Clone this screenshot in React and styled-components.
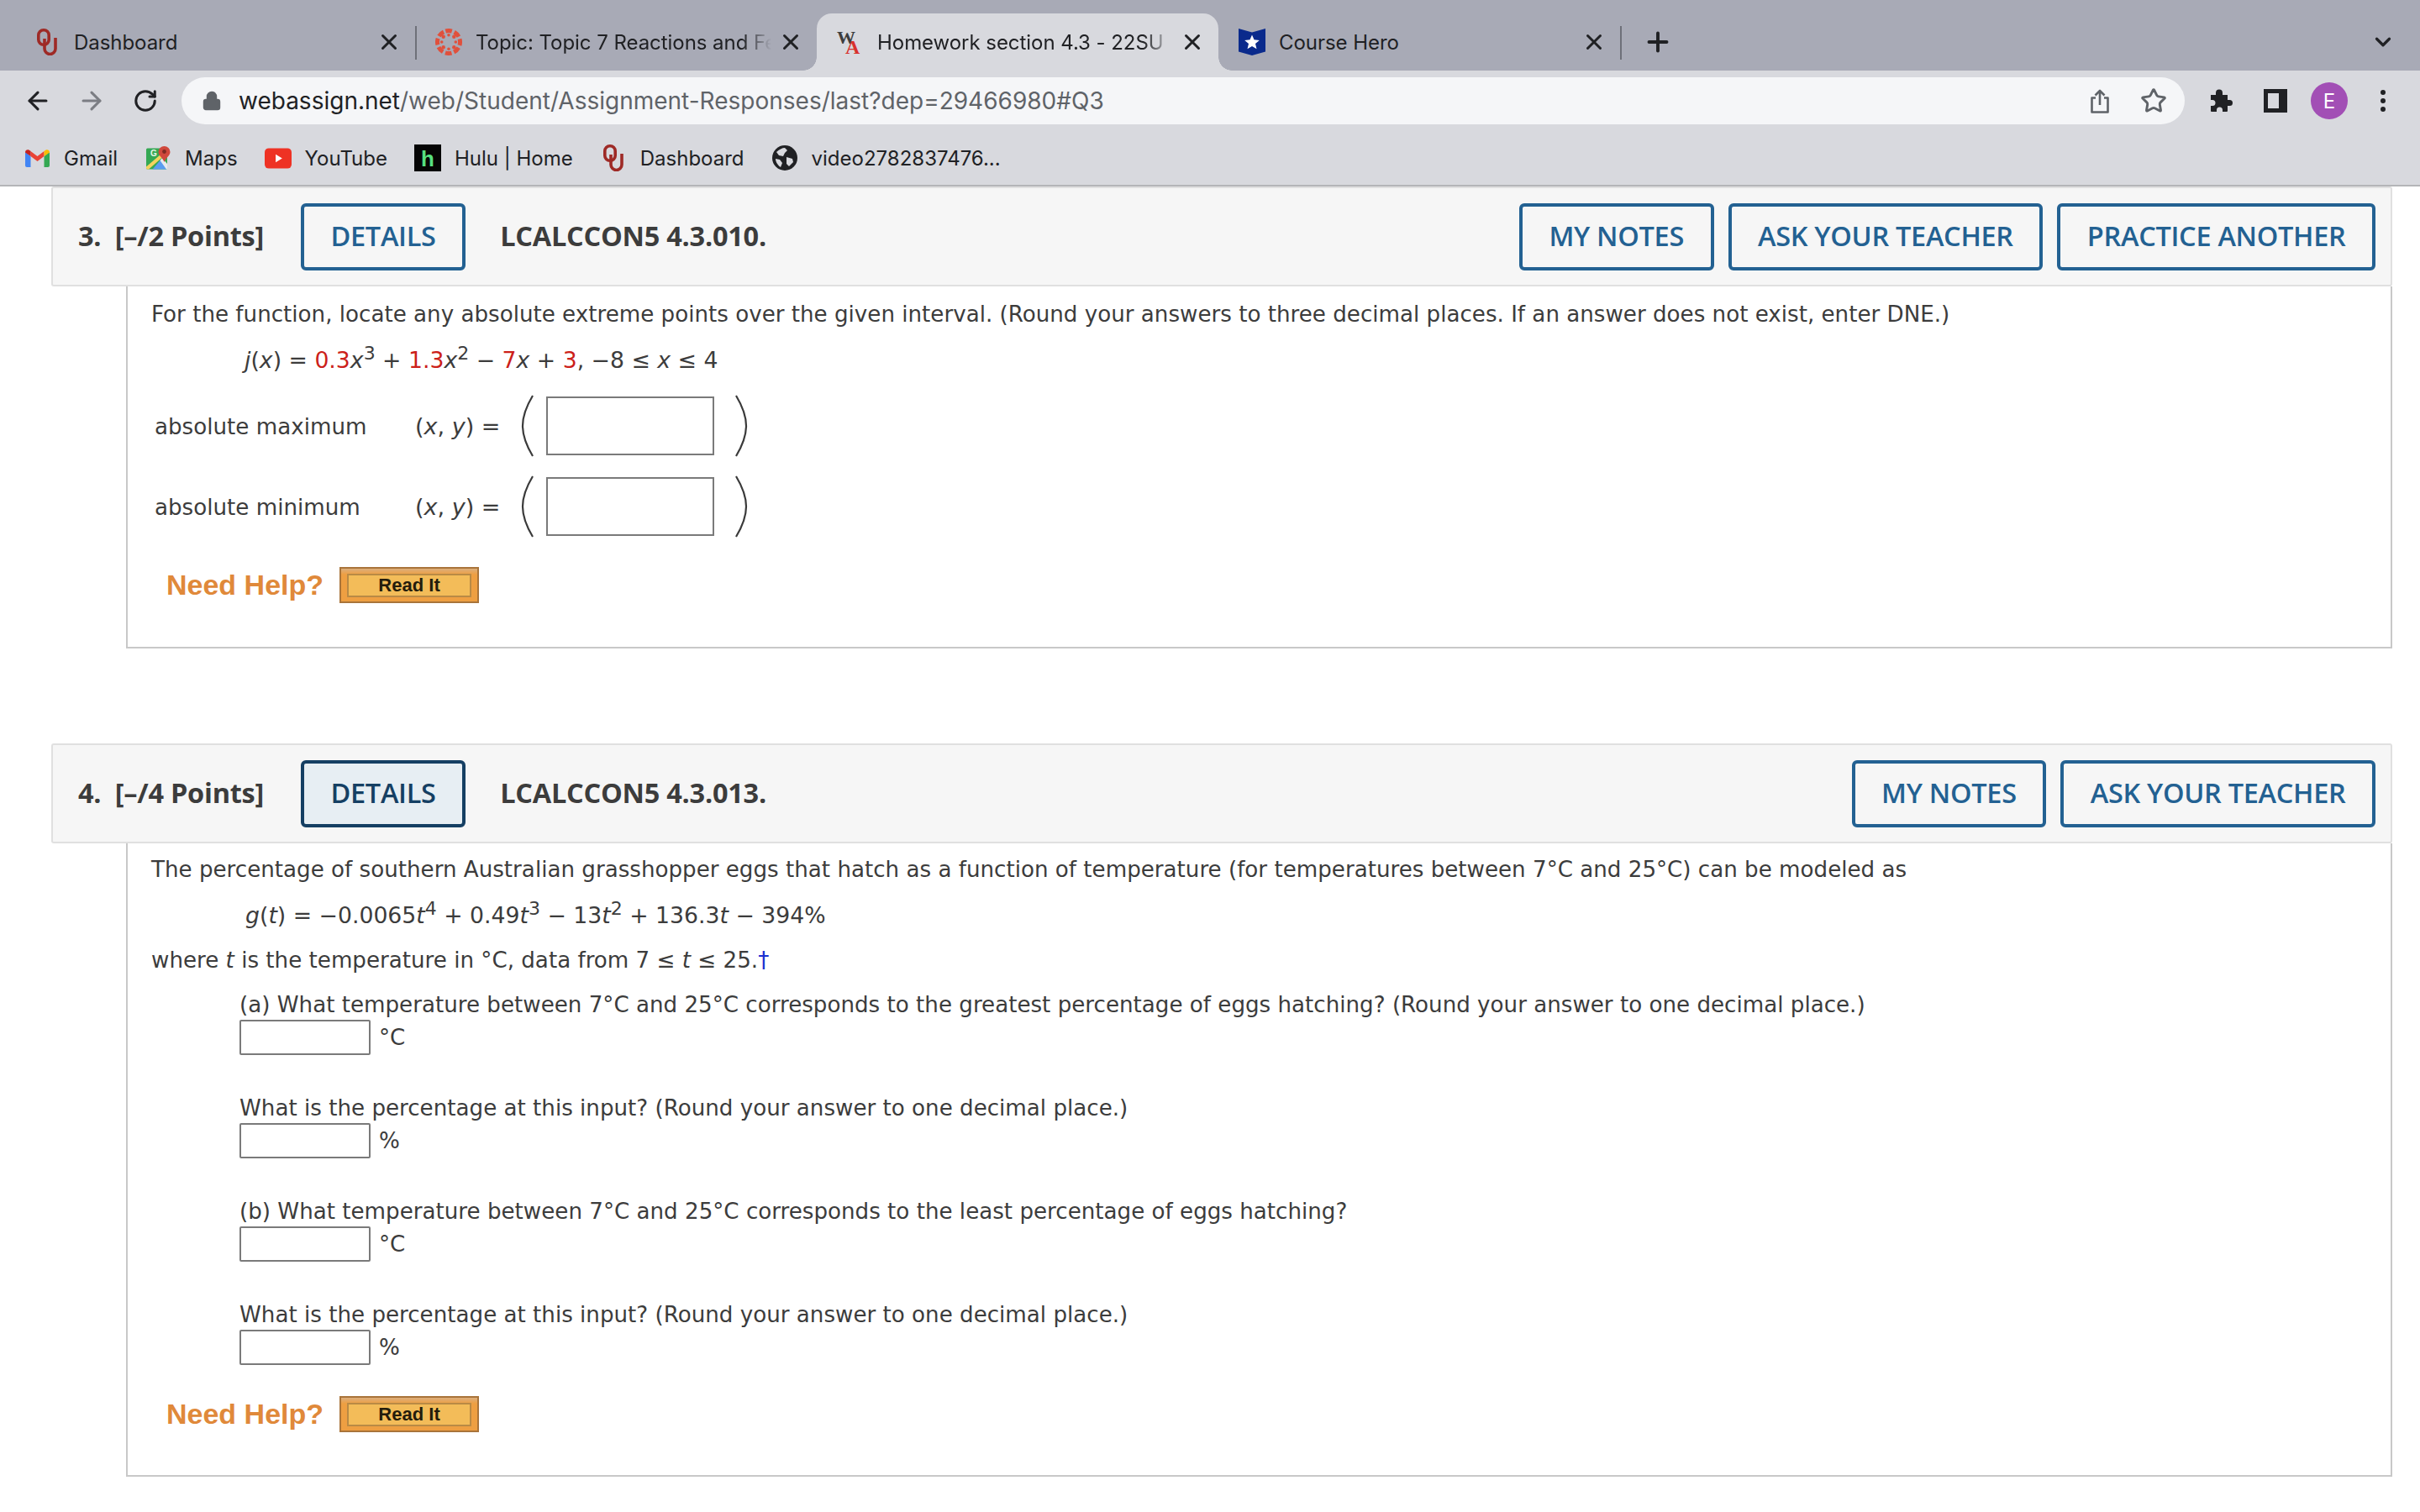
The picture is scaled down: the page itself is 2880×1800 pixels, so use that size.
import React from 'react';
import styled, { createGlobalStyle, css } from 'styled-components';
import { ArrowLeft, ArrowRight, RotateCw, Lock, Star, X, Plus, ChevronDown } from 'lucide-react';

const GlobalStyle = createGlobalStyle`
  html, body { margin: 0; padding: 0; background: #fff; }
  body { width: 2880px; height: 1800px; overflow: hidden; font-family: "DejaVu Sans", sans-serif; }
`;

const Shell = styled.div`
  width: 2880px;
  height: 1800px;
  overflow: hidden;
`;

const TabStrip = styled.div`
  height: 84px;
  background: #a8aab6;
  display: flex;
  align-items: flex-end;
  padding-left: 16px;
`;

const Tab = styled.div`
  width: 478px;
  flex: none;
  height: 68px;
  box-sizing: border-box;
  padding: 0 16px 0 24px;
  display: flex;
  align-items: center;
  gap: 16px;
  position: relative;
  background: ${(p) => (p.$active ? '#d8d9de' : 'transparent')};
  border-radius: ${(p) => (p.$active ? '18px 18px 0 0' : '0')};
  ${(p) =>
    p.$sep &&
    css`
      &::after {
        content: '';
        position: absolute;
        right: -2px;
        top: 15px;
        width: 2px;
        height: 40px;
        background: #6e7079;
      }
    `}
  ${(p) =>
    p.$active &&
    css`
      &::before,
      &::after {
        content: '';
        position: absolute;
        bottom: 0;
        width: 16px;
        height: 16px;
      }
      &::before {
        left: -16px;
        background: radial-gradient(circle at 0 0, transparent 15.5px, #d8d9de 16px);
      }
      &::after {
        right: -16px;
        background: radial-gradient(circle at 100% 0, transparent 15.5px, #d8d9de 16px);
      }
    `}
`;

const IconSlot = styled.div`
  width: 32px;
  flex: none;
  display: flex;
  align-items: center;
  justify-content: center;
`;

const TabTitle = styled.span`
  flex: 1;
  overflow: hidden;
  white-space: nowrap;
  font: 400 24px Inter, sans-serif;
  letter-spacing: -0.05px;
  color: #202124;
  -webkit-mask-image: ${(p) => (p.$fade ? 'linear-gradient(90deg, #000 90%, transparent 100%)' : 'none')};
  mask-image: ${(p) => (p.$fade ? 'linear-gradient(90deg, #000 90%, transparent 100%)' : 'none')};
`;

const CloseIcon = styled(X)`
  flex: none;
  margin-left: -8px;
  color: #202124;
`;

const NewTab = styled.div`
  margin: 0 0 16px 27px;
  color: #202124;
  display: flex;
`;

const StripEnd = styled.div`
  margin: 0 29px 19px auto;
  color: #202124;
  display: flex;
`;

const Toolbar = styled.div`
  height: 72px;
  background: #d8d9de;
  display: flex;
  align-items: center;
  padding: 0 0 0 26px;
  box-sizing: border-box;
`;

const NavBtn = styled.div`
  width: 38px;
  margin-right: 26px;
  display: flex;
  justify-content: center;
  color: ${(p) => (p.$dim ? '#7b7d83' : '#202124')};
`;

const AddressBar = styled.div`
  width: 2384px;
  height: 56px;
  margin-left: -2px;
  border-radius: 28px;
  background: #f5f6f8;
  display: flex;
  align-items: center;
  padding: 0 21px 0 24px;
  box-sizing: border-box;
  color: #5f6368;
`;

const Url = styled.div`
  flex: 1;
  margin-left: 20px;
  font: 400 28px Inter, sans-serif;
  color: #5f6368;
  b { font-weight: 400; color: #202124; }
`;

const BarIcons = styled.div`
  display: flex;
  gap: 37px;
  align-items: center;
`;

const ToolIcons = styled.div`
  display: flex;
  align-items: center;
  gap: 28px;
  margin-left: 30px;
`;

const PuzzleWrap = styled.div`
  display: flex;
  margin-right: 8px;
`;

const Avatar = styled.div`
  width: 44px;
  height: 44px;
  border-radius: 50%;
  background: #a24fb5;
  color: #fff;
  display: flex;
  align-items: center;
  justify-content: center;
  font: 400 24px Inter, sans-serif;
`;

const Bookmarks = styled.div`
  height: 64px;
  background: #d8d9de;
  border-bottom: 2px solid #b4b5b8;
  display: flex;
  align-items: center;
  padding: 0 0 0 28px;
  gap: 32px;
`;

const Bookmark = styled.div`
  display: flex;
  align-items: center;
  gap: 16px;
  font: 400 24px Inter, sans-serif;
  color: #202124;
`;

const Page = styled.div`
  padding: 0 33px 0 61px;
`;

const Question = styled.section`
  margin-bottom: ${(p) => p.$gap || 0}px;
`;

const Header = styled.div`
  height: 119px;
  box-sizing: border-box;
  background: #f6f6f6;
  border: 2px solid #e0e0e0;
  border-radius: 3px;
  display: flex;
  align-items: center;
  padding: 0 18px 0 30px;
  font-family: "Open Sans", sans-serif;
`;

const Points = styled.div`
  font-size: 32.5px;
  font-weight: 700;
  color: #3c3c3c;
  width: 265px;
  white-space: pre;
  letter-spacing: -0.25px;
  padding-bottom: 2px;
`;

const ActionBtn = styled.div`
  height: 80px;
  box-sizing: border-box;
  padding: 0 31.5px 2px;
  border: 4px solid ${(p) => (p.$focus ? '#153f63' : '#236192')};
  border-radius: 6px;
  background: ${(p) => (p.$focus ? '#e7eef3' : 'transparent')};
  color: ${(p) => (p.$focus ? '#153f63' : '#236192')};
  font-size: 32.5px;
  font-weight: 600;
  display: flex;
  align-items: center;
  letter-spacing: -0.3px;
  white-space: nowrap;
`;

const Code = styled.div`
  margin-left: 41px;
  margin-right: auto;
  font-size: 32.5px;
  font-weight: 700;
  color: #3c3c3c;
  letter-spacing: -0.25px;
  padding-bottom: 2px;
`;

const Actions = styled.div`
  display: flex;
  gap: 17px;
`;

const Body = styled.div`
  margin-left: 89px;
  height: ${(p) => p.$h}px;
  box-sizing: border-box;
  border: 2px solid #c8c8c8;
  border-top: 0;
  padding: ${(p) => p.$pt}px 0 0 28px;
  font-size: 26.15px;
  color: #3c3c3c;
  line-height: 36px;
`;

const Line = styled.div`
  margin-top: ${(p) => p.$mt || 0}px;
  margin-left: ${(p) => p.$ml || 0}px;
  white-space: nowrap;
`;

const MathLine = styled(Line)`
  font-size: 26.7px;
`;

const Red = styled.span`
  color: #cc1f1a;
`;

const I = styled.i`
  font-style: oblique;
`;

const Sup = styled.sup`
  font-size: 22px;
  line-height: 0;
`;

const Dagger = styled.span`
  color: #1a2fd0;
`;

const PointRow = styled.div`
  display: flex;
  align-items: center;
  height: 80px;
  margin-top: ${(p) => p.$mt || 0}px;
  padding-left: 4px;
`;

const PointLabel = styled.div`
  width: 310px;
  padding-top: 2px;
`;

const PointEq = styled.div`
  width: 125px;
  padding-top: 2px;
  font-size: 27px;
  white-space: nowrap;
`;

const BigInput = styled.div`
  width: 200px;
  height: 70px;
  box-sizing: border-box;
  border: 2px solid #7a7a7a;
  background: #fff;
  margin: 0 21px 0 11px;
`;

const SmallInput = styled.div`
  width: 156px;
  height: 42px;
  box-sizing: border-box;
  border: 2px solid #7a7a7a;
  border-radius: 2px;
  background: #fff;
`;

const AnswerRow = styled.div`
  display: flex;
  align-items: center;
  gap: 10px;
  margin-left: 105px;
  height: 42px;
`;

const HelpRow = styled.div`
  display: flex;
  align-items: center;
  gap: 19px;
  margin: ${(p) => p.$mt}px 0 0 18px;
`;

const NeedHelp = styled.div`
  font: 700 34px "Liberation Sans", sans-serif;
  color: #e0893a;
`;

const ReadIt = styled.div`
  width: 166px;
  height: 43px;
  box-sizing: border-box;
  border: 2px solid #a9743a;
  background: linear-gradient(#dcae7c 0, #ee9f42 7px);
  padding: 6px 7px 5px;
  display: flex;
`;

const ReadItInner = styled.div`
  flex: 1;
  border: 2px solid #b98a45;
  background: #f3bc59;
  display: flex;
  align-items: center;
  justify-content: center;
  font: 700 22px "Liberation Sans", sans-serif;
  color: #241c0c;
`;

const OuIcon = () => (
  <svg width="24" height="32" viewBox="0 0 24 32" fill="none" stroke="#9e2a26" strokeWidth="3.6">
    <rect x="1.8" y="1.8" width="12.4" height="17.400" rx="6" />
    <path d="M9 12v12a6.500 6.500 0 0 0 13 0V11" />
  </svg>
);

const CanvasIcon = () => (
  <svg width="32" height="32" viewBox="0 0 32 32" fill="#e0503c">
    <circle cx="16" cy="16" r="13.500" fill="none" stroke="#e0503c" strokeWidth="5" strokeDasharray="7.6 3" transform="rotate(-106 16 16)" />
    <circle cx="16" cy="7.700" r="1.800" />
    <circle cx="16" cy="24.300" r="1.800" />
    <circle cx="7.700" cy="16" r="1.800" />
    <circle cx="24.300" cy="16" r="1.800" />
    <circle cx="9.700" cy="9.700" r="2.200" />
    <circle cx="22.300" cy="9.700" r="2.200" />
    <circle cx="9.700" cy="22.300" r="2.200" />
    <circle cx="22.300" cy="22.300" r="2.200" />
  </svg>
);

const LogoText = styled.text`
  font-family: "Liberation Serif", serif;
  font-weight: 700;
`;

const WaIcon = () => (
  <svg width="30" height="30" viewBox="0 0 30 30" overflow="visible">
    <LogoText x="-1" y="17" fontSize="22" fill="#3d3d3d">W</LogoText>
    <LogoText x="9" y="29" fontSize="24" fill="#d8322e">A</LogoText>
  </svg>
);

const ShieldIcon = () => (
  <svg width="32" height="32" viewBox="0 0 32 32">
    <path d="M0 0l16 4.500L32 0v27.500L16 32 0 27.500z" fill="#0a2a8c" />
    <path d="M16 7.500l2.500 5.800 6.300.6-4.800 4.100 1.500 6.200-5.500-3.300-5.500 3.300 1.500-6.200-4.800-4.100 6.300-.6z" fill="#fff" />
  </svg>
);

const GmailIcon = () => (
  <svg width="29" height="21" viewBox="0 0 29 21">
    <path d="M0 3v16a2 2 0 0 0 2 2h4.500V8z" fill="#4285f4" />
    <path d="M29 3v16a2 2 0 0 1-2 2h-4.500V8z" fill="#34a853" />
    <path d="M6.500 8V2l8 6 8-6v6l-8 6z" fill="#ea4335" />
    <path d="M0 3.500C0 .5 3.500-1 6.500 2v6L0 3.500z" fill="#c5221f" />
    <path d="M29 3.500C29 .5 25.500-1 22.500 2v6L29 3.500z" fill="#fbbc04" />
  </svg>
);

const MapsIcon = () => (
  <svg width="29" height="28" viewBox="0 0 29 28">
    <rect y="2.500" width="25" height="25" rx="1.500" fill="#34a853" />
    <path d="M7.500 27.500L17 16.500l8 11z" fill="#5a9cf0" />
    <path d="M0 24.500L17 10l2.500 3L3 27.500H1.500A1.500 1.500 0 0 1 0 26z" fill="#f4d35e" />
    <path d="M19 14l6 7v6.500h-1L16.500 17z" fill="#e8eaed" />
    <path d="M21.500 0a7 7 0 0 1 7 7c0 4.500-5.500 7-7 12-1.500-5-7-7.500-7-12a7 7 0 0 1 7-7z" fill="#d0483c" />
    <circle cx="21.500" cy="6.500" r="2.400" fill="#7e2a22" />
    <text x="5" y="12" fontSize="10" fontWeight="700" fill="#e8f5e9" fontFamily="Liberation Sans, sans-serif">G</text>
  </svg>
);

const YoutubeIcon = () => (
  <svg width="33" height="25" viewBox="0 0 33 25">
    <rect width="33" height="25" rx="5" fill="#ee3224" />
    <path d="M13.500 7.500l8 5-8 5z" fill="#fff" />
  </svg>
);

const HuluIcon = () => (
  <svg width="32" height="32" viewBox="0 0 32 32">
    <rect width="32" height="32" fill="#050505" />
    <text x="16" y="26" textAnchor="middle" fontSize="26" fontWeight="700" fill="#57e07f" fontFamily="Liberation Sans, sans-serif">h</text>
  </svg>
);

const GlobeIcon = () => (
  <svg width="30" height="30" viewBox="0 0 30 30">
    <circle cx="15" cy="15" r="15" fill="#202124" />
    <path d="M5 8c3-3 7-5 10-5l3 3-3 3-2 4-5-1zM17 14l7 2 1 4-5 5-3-3zM4 16l5 1 3 4-2 5c-3-2-6-6-6-10z" fill="#d8d9de" />
  </svg>
);

const ShareIcon = () => (
  <svg width="22" height="29" viewBox="0 0 22 29" fill="none" stroke="#5f6368" strokeWidth="2.600" strokeLinejoin="round">
    <path d="M6 10.500H1.500v17h19v-17H16M11 19V2M5.500 7.500L11 2l5.500 5.500" />
  </svg>
);

const PuzzleIcon = () => (
  <svg width="28" height="28" viewBox="0 0 28 28" fill="#202124">
    <path d="M1 7h6V4.500a4 4 0 0 1 8 0V7h6v6h2.500a3.500 3.500 0 0 1 0 7H21v6a1 1 0 0 1-1 1h-5v-2a3.500 3.500 0 0 0-7 0v2H2a1 1 0 0 1-1-1v-6h2a3.500 3.500 0 0 0 0-7H1V8z" />
  </svg>
);

const PanelIcon = () => (
  <svg width="28" height="28" viewBox="0 0 28 28">
    <path d="M0 0h28v28H0z" fill="#202124" />
    <path d="M5 5h13v18H5z" fill="#d8d9de" />
  </svg>
);

const MenuDots = () => (
  <svg width="28" height="28" viewBox="0 0 28 28" fill="#202124">
    <circle cx="14" cy="4" r="3" />
    <circle cx="14" cy="14" r="3" />
    <circle cx="14" cy="24" r="3" />
  </svg>
);

const BigParen = ({ right }) => (
  <svg width="20" height="74" viewBox="0 0 20 74" style={right ? { transform: 'scaleX(-1)' } : undefined}>
    <path d="M15 1C6 16 3 27 3 37s3 21 12 36" fill="none" stroke="#3a3a3a" strokeWidth="2.2" />
  </svg>
);

const tabs = [
  { title: 'Dashboard', icon: <OuIcon />, sep: true },
  { title: 'Topic: Topic 7 Reactions and Fe', icon: <CanvasIcon />, fade: true },
  { title: 'Homework section 4.3 - 22SU', icon: <WaIcon />, fade: true, active: true },
  { title: 'Course Hero', icon: <ShieldIcon />, sep: true },
];

const marks = [
  { title: 'Gmail', icon: <GmailIcon /> },
  { title: 'Maps', icon: <MapsIcon /> },
  { title: 'YouTube', icon: <YoutubeIcon /> },
  { title: 'Hulu | Home', icon: <HuluIcon /> },
  { title: 'Dashboard', icon: <OuIcon /> },
  { title: 'video2782837476...', icon: <GlobeIcon /> },
];

const HelpLine = ({ mt }) => (
  <HelpRow $mt={mt}>
    <NeedHelp>Need Help?</NeedHelp>
    <ReadIt><ReadItInner>Read It</ReadItInner></ReadIt>
  </HelpRow>
);

const PointAnswer = ({ label, mt }) => (
  <PointRow $mt={mt}>
    <PointLabel>{label}</PointLabel>
    <PointEq>(<I>x</I>, <I>y</I>) =</PointEq>
    <BigParen />
    <BigInput />
    <BigParen right />
  </PointRow>
);

const App = () => (
  <Shell>
    <GlobalStyle />
    <TabStrip>
      {tabs.map((t) => (
        <Tab key={t.title} $active={t.active} $sep={t.sep}>
          <IconSlot>{t.icon}</IconSlot>
          <TabTitle $fade={t.fade}>{t.title}</TabTitle>
          <CloseIcon size={30} strokeWidth={2.4} />
        </Tab>
      ))}
      <NewTab><Plus size={36} strokeWidth={2.6} /></NewTab>
      <StripEnd><ChevronDown size={30} strokeWidth={2.6} /></StripEnd>
    </TabStrip>

    <Toolbar>
      <NavBtn><ArrowLeft size={34} strokeWidth={2.2} /></NavBtn>
      <NavBtn $dim><ArrowRight size={34} strokeWidth={2.2} /></NavBtn>
      <NavBtn><RotateCw size={30} strokeWidth={2.4} /></NavBtn>
      <AddressBar>
        <Lock size={24} fill="#5f6368" strokeWidth={2.4} />
        <Url><b>webassign.net</b>/web/Student/Assignment-Responses/last?dep=29466980#Q3</Url>
        <BarIcons>
          <ShareIcon />
          <Star size={32} strokeWidth={2.2} />
        </BarIcons>
      </AddressBar>
      <ToolIcons>
        <PuzzleWrap><PuzzleIcon /></PuzzleWrap>
        <PanelIcon />
        <Avatar>E</Avatar>
        <MenuDots />
      </ToolIcons>
    </Toolbar>

    <Bookmarks>
      {marks.map((m, i) => (
        <Bookmark key={i}><IconSlot>{m.icon}</IconSlot>{m.title}</Bookmark>
      ))}
    </Bookmarks>

    <Page>
      <Question $gap={113}>
        <Header>
          <Points>3.  [–/2 Points]</Points>
          <ActionBtn>DETAILS</ActionBtn>
          <Code>LCALCCON5 4.3.010.</Code>
          <Actions>
            <ActionBtn>MY NOTES</ActionBtn>
            <ActionBtn>ASK YOUR TEACHER</ActionBtn>
            <ActionBtn>PRACTICE ANOTHER</ActionBtn>
          </Actions>
        </Header>
        <Body $h={431} $pt={15}>
          <Line>For the function, locate any absolute extreme points over the given interval. (Round your answers to three decimal places. If an answer does not exist, enter DNE.)</Line>
          <MathLine $ml={111} $mt={19}>
            <I>j</I>(<I>x</I>) = <Red>0.3</Red><I>x</I><Sup>3</Sup> + <Red>1.3</Red><I>x</I><Sup>2</Sup> − <Red>7</Red><I>x</I> + <Red>3</Red>, −8 ≤ <I>x</I> ≤ 4
          </MathLine>
          <PointAnswer label="absolute maximum" mt={20} />
          <PointAnswer label="absolute minimum" mt={16} />
          <HelpLine mt={32} />
        </Body>
      </Question>

      <Question>
        <Header>
          <Points>4.  [–/4 Points]</Points>
          <ActionBtn $focus>DETAILS</ActionBtn>
          <Code>LCALCCON5 4.3.013.</Code>
          <Actions>
            <ActionBtn>MY NOTES</ActionBtn>
            <ActionBtn>ASK YOUR TEACHER</ActionBtn>
          </Actions>
        </Header>
        <Body $h={754} $pt={13}>
          <Line>The percentage of southern Australian grasshopper eggs that hatch as a function of temperature (for temperatures between 7°C and 25°C) can be modeled as</Line>
          <MathLine $ml={112} $mt={19}>
            <I>g</I>(<I>t</I>) = −0.0065<I>t</I><Sup>4</Sup> + 0.49<I>t</I><Sup>3</Sup> − 13<I>t</I><Sup>2</Sup> + 136.3<I>t</I> − 394%
          </MathLine>
          <Line $mt={17}>where <I>t</I> is the temperature in °C, data from 7 ≤ <I>t</I> ≤ 25.<Dagger>†</Dagger></Line>
          <Line $ml={105} $mt={17}>(a) What temperature between 7°C and 25°C corresponds to the greatest percentage of eggs hatching? (Round your answer to one decimal place.)</Line>
          <AnswerRow><SmallInput />°C</AnswerRow>
          <Line $ml={105} $mt={45}>What is the percentage at this input? (Round your answer to one decimal place.)</Line>
          <AnswerRow><SmallInput />%</AnswerRow>
          <Line $ml={105} $mt={45}>(b) What temperature between 7°C and 25°C corresponds to the least percentage of eggs hatching?</Line>
          <AnswerRow><SmallInput />°C</AnswerRow>
          <Line $ml={105} $mt={45}>What is the percentage at this input? (Round your answer to one decimal place.)</Line>
          <AnswerRow><SmallInput />%</AnswerRow>
          <HelpLine mt={37} />
        </Body>
      </Question>
    </Page>
  </Shell>
);

export default App;
